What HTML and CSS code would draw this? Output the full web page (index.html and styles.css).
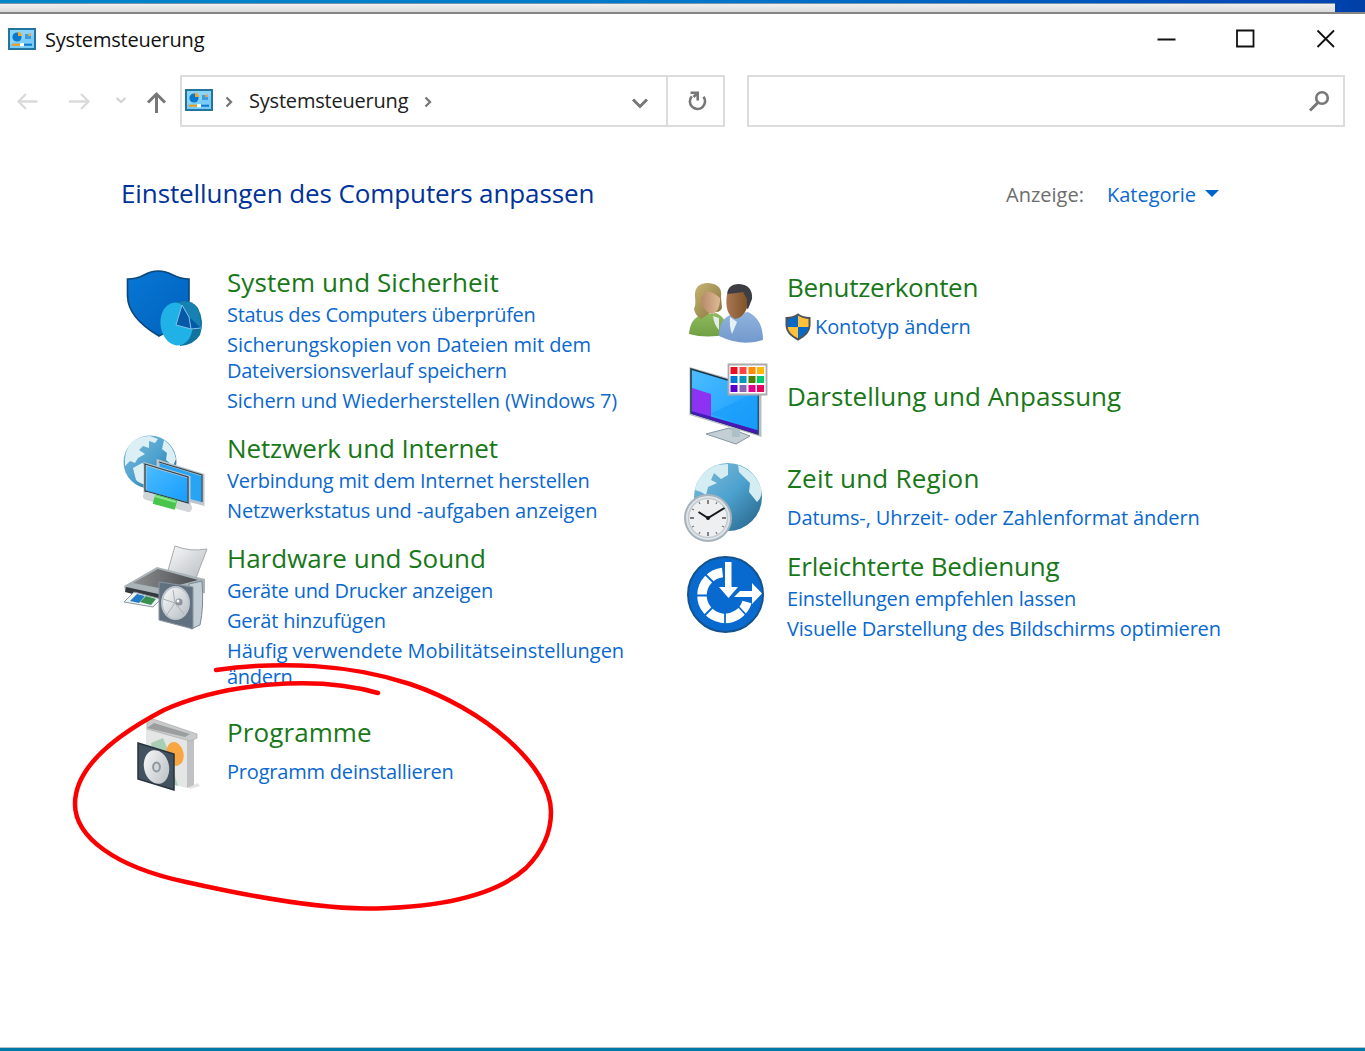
FILE: index.html
```html
<!DOCTYPE html>
<html lang="de">
<head>
<meta charset="utf-8">
<title>Systemsteuerung</title>
<link rel="stylesheet" href="styles.css">
</head>
<body>
<svg class="defs" width="0" height="0" aria-hidden="true">
  <defs>
    <symbol id="panel" viewBox="0 0 28 22">
      <rect x="1" y="1" width="26" height="20" fill="#79ccf8" stroke="#23749f" stroke-width="2"/>
      <path d="M2 2H26V7L2 16Z" fill="#9bdcfb" opacity=".5"/>
      <circle cx="9" cy="9" r="4.6" fill="#0879cf"/>
      <path d="M10 8V3.5A5 5 0 0 1 14 8Z" fill="#f3a52b"/>
      <path d="M17 6H23V11H17Z" fill="#409bd8"/><path d="M20 5.5H23V8H20Z" fill="#dba35f"/>
      <path d="M4 16.7H13" stroke="#f29b16" stroke-width="2"/><path d="M12 16.7H16" stroke="#fff" stroke-width="3"/><path d="M16 16.7H24" stroke="#0879cf" stroke-width="2"/>
    </symbol>
    <linearGradient id="globe" x1="0" y1="0" x2="1" y2="1"><stop offset="0" stop-color="#85bcd8"/><stop offset=".5" stop-color="#4da2cf"/><stop offset="1" stop-color="#235f83"/></linearGradient>
    <linearGradient id="screen" x1="0" y1="0" x2="1" y2="1"><stop offset="0" stop-color="#4dbdff"/><stop offset="1" stop-color="#159bff"/></linearGradient>
    <linearGradient id="shield" x1="0" y1="0" x2="1" y2="1"><stop offset="0" stop-color="#0877d4"/><stop offset="1" stop-color="#0061bd"/></linearGradient>
    <linearGradient id="metal" x1="0" y1="0" x2="1" y2="1"><stop offset="0" stop-color="#fafafa"/><stop offset="1" stop-color="#b7bdc2"/></linearGradient>
    <linearGradient id="hair" x1="0" y1="0" x2="1" y2="1"><stop offset="0" stop-color="#c9b674"/><stop offset="1" stop-color="#82703b"/></linearGradient>
    <linearGradient id="green" x1="0" y1="0" x2="0" y2="1"><stop offset="0" stop-color="#8fb95d"/><stop offset="1" stop-color="#71a044"/></linearGradient>
    <linearGradient id="blue" x1="0" y1="0" x2="0" y2="1"><stop offset="0" stop-color="#91b4de"/><stop offset="1" stop-color="#7299cc"/></linearGradient>
    <linearGradient id="skin" x1="0" y1="0" x2="1" y2="0"><stop offset="0" stop-color="#b58a6a"/><stop offset="1" stop-color="#dfb995"/></linearGradient>
    <linearGradient id="skin-dark" x1="0" y1="0" x2="1" y2="0"><stop offset="0" stop-color="#a87853"/><stop offset="1" stop-color="#815329"/></linearGradient>
    <linearGradient id="tray" x1="0" y1="0" x2="1" y2="0"><stop offset="0" stop-color="#8c8e90"/><stop offset="1" stop-color="#4a4d50"/></linearGradient>
  </defs>
</svg>

<div class="backdrop"><div class="behind"></div></div>
<main class="window">
  <header class="titlebar">
    <svg class="panel-icon"><use href="#panel"/></svg>
    <span class="caption snug">Systemsteuerung</span>
    <svg class="controls" viewBox="1150 24 200 30" fill="none" stroke="#111" stroke-width="1.800"><path d="M1157.500 39.500H1175.500M1237 30.500H1253.500V46.500H1237ZM1317.500 30.500L1334 47M1334 30.500L1317.500 47"/></svg>
  </header>

  <nav class="toolbar">
    <svg class="arrows" viewBox="0 75 180 52" fill="none" stroke-width="2.300"><path d="M37.500 101.500H18.500M26 94L18.500 101.500L26 109" stroke="#dadada"/><path d="M69 101.500H88.500M81 94L88.500 101.500L81 109" stroke="#dadada"/><path d="M116.500 98L121 102L125.500 98" stroke="#d3d3d3"/><path d="M156.500 113V94.500M148 102.500L156.500 94L165 102.500" stroke="#777" stroke-width="3"/></svg>
    <div class="address">
      <svg class="panel-icon"><use href="#panel"/></svg>
      <svg class="crumb-sep" viewBox="0 0 10 12"><path d="M2.500 1.500L7 6L2.500 10.500"/></svg>
      <span class="crumb snug">Systemsteuerung</span>
      <svg class="crumb-sep" viewBox="0 0 10 12"><path d="M2.500 1.500L7 6L2.500 10.500"/></svg>
      <svg class="drop" viewBox="0 0 18 12"><path d="M2 2.500L9 9.500L16 2.500"/></svg>
    </div>
    <div class="reload"><svg viewBox="0 0 22 22" width="22" height="22" fill="none" stroke="#777" stroke-width="2.600"><path d="M5.800 6.300A7.600 7.600 0 1 0 17.500 6.800M4.500 2.800H11.700V10.500M11.500 3L7.500 7"/></svg></div>
    <div class="search"><svg viewBox="0 0 24 22" width="24" height="22" fill="none" stroke="#777"><circle cx="15" cy="8" r="5.800" stroke-width="2.600"/><path d="M11 12.500L3 20.500" stroke-width="3"/></svg></div>
  </nav>

  <section class="heading">
    <h1>Einstellungen des Computers anpassen</h1>
    <span class="view-label">Anzeige:</span>
    <a class="view-value">Kategorie</a>
    <svg class="view-arrow" viewBox="0 0 14 8"><path d="M0 0H14L7 7Z" fill="#0066cc"/></svg>
  </section>

  <div class="categories">
    <div class="column">
      <article class="group">
        <svg class="icon h149" viewBox="120 265 107 149">
          <path d="M127.500 279Q137 279 144 275Q158 267 173 275Q181 279 189 279V300Q188 322 159 336Q128 318 127.500 296Z" fill="url(#shield)" stroke="#0b4779" stroke-width="1.600"/>
          <path d="M177 302Q190 298 198 308Q205 322 200 335Q194 345 180 346Z" fill="#11749f"/>
          <ellipse cx="176.500" cy="324" rx="16" ry="21.500" transform="rotate(-8 176.500 324)" fill="#20b2e7"/>
          <path d="M180 302Q194 299 199 312L201 328L190 328Z" fill="#1681b2"/><path d="M182 305L176 325L191 329L201 328L189 317Z" fill="#0759a8"/><path d="M182 305L176 325L191 329L201 328M182 305L189 317L191 329" fill="none" stroke="#7fc4ea" stroke-width="1"/>
        </svg>
        <div class="text">
          <h2 class="wide">System und Sicherheit</h2>
          <a class="tight">Status des Computers überprüfen</a>
          <a><span class="near">Sicherungskopien von Dateien mit dem</span><br><span class="tight">Dateiversionsverlauf speichern</span></a>
          <a class="close">Sichern und Wiederherstellen (Windows 7)</a>
        </div>
      </article>
      <article class="group">
        <svg class="icon h93" viewBox="120 431 107 93">
          <circle cx="150" cy="462" r="26.500" fill="url(#globe)"/>
          <path d="M131 443Q139 436 150 436L158 439L155 443L149 441L149 448L143 446L139 450L145 454L138 458L135 463L130 461L125 466Q124 451 131 443Z" fill="#dceff4"/><path d="M164 440Q174 447 176 459L173 466L166 460L167 453L162 449ZM133 468L142 463L153 471L150 486Q140 484 136 480Z" fill="#dceff4"/>
          <path d="M158 461L203 475V504L158 492Z" fill="#28a4f5" stroke="#bcc6cc" stroke-width="3"/><path d="M159 462L202 475V502" fill="none" stroke="#31434f" stroke-width="1.200"/>
          <path d="M145 464L189 477V504L145 492Z" fill="url(#screen)" stroke="#bcc6cc" stroke-width="3"/><path d="M145 464L188 477V503L145 491Z" fill="none" stroke="#294252" stroke-width="1.300"/>
          <path d="M147 496L188 508" stroke="#d0d6d8" stroke-width="8" stroke-linecap="round"/><path d="M154 499L176 505" stroke="#48c64c" stroke-width="10"/><path d="M155 496L176 502" stroke="#8ce58d" stroke-width="2"/>
        </svg>
        <div class="text">
          <h2 class="close">Netzwerk und Internet</h2>
          <a class="snug">Verbindung mit dem Internet herstellen</a>
          <a class="close">Netzwerkstatus und -aufgaben anzeigen</a>
        </div>
      </article>
      <article class="group">
        <svg class="icon h149" viewBox="120 541 107 149">
          <path d="M175 546Q190 552 207 549L196 578L167 574Z" fill="url(#metal)" stroke="#a7a9ab" stroke-width="1"/>
          <path d="M124 586L157 567L205 579V593L160 601L125 590Z" fill="#aab3b8"/>
          <path d="M133 583L158 569L198 580L164 589Z" fill="url(#tray)"/><path d="M126 587L163 595V602L125 592Z" fill="#33393c"/>
          <path d="M124 602L134 592L161 599L153 607Z" fill="#edf3f7" stroke="#8b969d"/><path d="M130 601L137 594L145 596L139 603Z" fill="#227cc5"/><path d="M140 602L146 596L156 599L151 605Z" fill="#398f50"/>
          <path d="M189 584L202 581Q204 607 200 625L191 629Z" fill="#c3cdd5" stroke="#7c8993"/>
          <path d="M159 582L193 587V629L159 620Z" fill="#62717f" stroke="#8996a1"/>
          <ellipse cx="175.500" cy="603" rx="13.500" ry="16" fill="url(#metal)" stroke="#bcc5cc" stroke-width="2"/><path d="M175 603L163 599M175 603L166 616M175 603L173 590M175 603L184 614" stroke="#a7b0b5"/><circle cx="179" cy="602" r="3.600" fill="#8b949b"/><circle cx="178" cy="601" r="1.500" fill="#fff"/>
        </svg>
        <div class="text">
          <h2>Hardware und Sound</h2>
          <a class="tight">Geräte und Drucker anzeigen</a>
          <a class="snug">Gerät hinzufügen</a>
          <a><span class="near">Häufig verwendete Mobilitätseinstellungen</span><br><span class="tight">ändern</span></a>
        </div>
      </article>
      <article class="group single far">
        <svg class="icon h70" viewBox="120 715 107 70">
          <path d="M188 787L198 783L200 786L190 789Z" fill="#e4e4e4"/>
          <path d="M146 727L187 738V788L146 777Z" fill="#e4e5e5"/><path d="M187 738L194 734V785L187 788Z" fill="#bfc1c2"/>
          <path d="M147 720L153 719L197 734V738L190 741L147 729Z" fill="#c9cbcb" stroke="#aeb0b0" stroke-width=".8"/><path d="M154 723L190 734L185 737L147 728Z" fill="#9b9e9f"/>
          <path d="M151 743L163 738L170 755L154 762ZM172 767L178 786L168 783Z" fill="#a8cfb5"/><ellipse cx="175" cy="754" rx="8.500" ry="12" transform="rotate(-12 175 754)" fill="#f7a642"/>
          <path d="M138 743L174 754V790L138 779Z" fill="#435260" stroke="#27323b" stroke-width="1.500"/><ellipse cx="156.500" cy="767" rx="12.500" ry="17" transform="rotate(-12 156.500 767)" fill="url(#metal)"/><ellipse cx="156.500" cy="767" rx="3.400" ry="4.500" fill="#d3d8db" stroke="#8d999f" stroke-width="2"/>
        </svg>
        <div class="text">
          <h2 class="wide">Programme</h2>
          <a class="snug">Programm deinstallieren</a>
        </div>
      </article>
    </div>

    <div class="column right">
      <article class="group single">
        <svg class="icon h70" viewBox="680 270 107 70">
          <path d="M689 334Q690 319 701 315L716 313Q728 318 727 334Q708 339 689 334Z" fill="url(#green)"/>
          <path d="M713 316L719 318V330Q714 325 713 316Z" fill="#e2ebe8"/>
          <path d="M694 309Q696 304 695 297Q694 283 708 283Q723 284 721 297L722 308Q719 314 713 311L701 319Q695 315 694 309Z" fill="url(#hair)"/>
          <path d="M701 298Q704 296 706 291Q714 292 720 298Q720 313 711 314Q702 310 701 298Z" fill="url(#skin)"/>
          <path d="M719 336Q719 320 730 315L748 312Q763 319 763 340Q742 347 719 336Z" fill="url(#blue)"/>
          <path d="M730 317L737 322L732 334Q729 326 730 317Z" fill="#e6f1f6"/>
          <path d="M727 296Q727 284 739 284Q753 285 752 299L748 309L742 305Z" fill="#3d3e42"/>
          <path d="M727 294Q738 293 743 292L747 299V308Q743 318 735 319Q724 314 727 294Z" fill="url(#skin-dark)"/>
        </svg>
        <div class="text">
          <h2 class="tight">Benutzerkonten</h2>
          <a class="guarded close"><svg class="uac" viewBox="0 0 26 28"><path d="M13 1.500Q18 5 24.500 5V13Q24 21 13 26.500Q2 21 1.500 13V5Q8 5 13 1.500Z" fill="#ffc13b"/><path d="M13 2V14H2V5Q8 5 13 2ZM13 14H24Q23 21 13 26Z" fill="#0869c4"/><path d="M13 1.500Q18 5 24.500 5V13Q24 21 13 26.500Q2 21 1.500 13V5Q8 5 13 1.500Z" fill="none" stroke="#4d5358" stroke-width="2"/></svg>Kontotyp ändern</a>
        </div>
      </article>
      <article class="group look">
        <svg class="icon h36" viewBox="680 379 107 36">
          <path d="M706 434L729 428L750 436L736 444Z" fill="#c3ced5" stroke="#8598a4"/><path d="M732 424H740V437H732Z" fill="#afbfc7"/>
          <path d="M691 369L760 389V435L691 414Z" fill="url(#screen)" stroke="#b5bec5" stroke-width="3"/><path d="M691 369L758 389V434L691 413Z" fill="url(#screen)" stroke="#1c3543" stroke-width="1.500"/>
          <path d="M710 414L758 391V430Z" fill="#169bf8" opacity=".6"/><path d="M692 388L711 394V417L692 411Z" fill="#8d31f3"/><path d="M692 411L757 430V434L692 414Z" fill="#4718b5"/>
          <path d="M728.500 364.500H766.500V394.500H728.500Z" fill="#fff" stroke="#aaa" stroke-width="1.800"/>
          <path d="M730.500 367H737.500V374H730.500Z" fill="#e81123"/><path d="M739.500 367H746.500V374H739.500Z" fill="#ff4343"/><path d="M748.500 367H755.500V374H748.500Z" fill="#ff8c00"/><path d="M757 367H764V374H757Z" fill="#ffb900"/>
          <path d="M730.500 376H737.500V383H730.500Z" fill="#0078d7"/><path d="M739.500 376H746.500V383H739.500Z" fill="#0099bc"/><path d="M748.500 376H755.500V383H748.500Z" fill="#498205"/><path d="M757 376H764V383H757Z" fill="#00cc6a"/>
          <path d="M730.500 385H737.500V392H730.500Z" fill="#5a00cc"/><path d="M739.500 385H746.500V392H739.500Z" fill="#8764b8"/><path d="M748.500 385H755.500V392H748.500Z" fill="#e3008c"/><path d="M757 385H764V392H757Z" fill="#ea005e"/>
        </svg>
        <div class="text"><h2>Darstellung und Anpassung</h2></div>
      </article>
      <article class="group single time">
        <svg class="icon h70" viewBox="680 461 107 70">
          <circle cx="728" cy="497" r="34" fill="url(#globe)"/>
          <path d="M695 490Q698 472 717 465L728 464L728 475L721 479L714 473L711 480L717 483L708 487L706 495L701 492ZM738 465Q755 471 761 488Q763 497 757 502L749 492L750 483L739 472Z" fill="#d4edf2"/>
          <circle cx="708" cy="518" r="23" fill="#dfe4e8" stroke="#a7b3bc" stroke-width="2"/><circle cx="708" cy="518" r="19.500" fill="#eeeff0" stroke="#c3cbd0" stroke-width="1.500"/>
          <g fill="none" stroke="#777" stroke-width="1.800"><path d="M708 500V504M708 532V536M690 518H694M722 518H726"/><path stroke-width="1.200" d="M699 502L700 504M717 502L716 504M692 509L694 510M724 527L722 526M699 534L700 532M717 534L716 532M692 527L694 526"/></g>
          <path d="M698.500 512L708 518L724.500 508" fill="none" stroke="#171a1c" stroke-width="2"/><circle cx="708" cy="518" r="2" fill="#171a1c"/>
        </svg>
        <div class="text">
          <h2 class="wider">Zeit und Region</h2>
          <a class="close">Datums-, Uhrzeit- oder Zahlenformat ändern</a>
        </div>
      </article>
      <article class="group access">
        <svg class="icon h93" viewBox="680 549 107 93">
          <circle cx="725.500" cy="594.500" r="37.500" fill="#0869cf" stroke="#13528d" stroke-width="2"/>
          <path d="M722.500 572.500A23 23 0 1 0 747 602" fill="none" stroke="#fff" stroke-width="9.500"/>
          <path d="M696 595.500H710M705 574L717 586M705 615L715 605M725 608V625M736 604L747 616" stroke="#0869cf" stroke-width="1.800"/>
          <path d="M725 562H731.500V587H738L728.500 598L719 587H725Z" fill="#fff"/><path d="M740 591H752V583L762 593.500L752 604V597H734Z" fill="#fff"/>
        </svg>
        <div class="text">
          <h2 class="snug">Erleichterte Bedienung</h2>
          <a class="snug">Einstellungen empfehlen lassen</a>
          <a class="snug">Visuelle Darstellung des Bildschirms optimieren</a>
        </div>
      </article>
    </div>
  </div>
</main>
<svg class="marker" viewBox="0 0 1365 1051" fill="none" stroke="#fb0000" stroke-width="4.500" stroke-linecap="round" stroke-linejoin="round"><path d="M216 670C280 661 350 664 410 684C482 708 551 765 551 812C551 832 544 850 526 868C493 898 430 908 365 908.500C310 908 235 893 186 882C115 867 75 837 75 804C75 765 120 733 164 710C225 683 315 675 378 693"/></svg>
</body>
</html>
```
FILE: styles.css
```css
* { box-sizing: border-box; }
body { margin: 0; height: 1051px; overflow: hidden; display: flex; flex-direction: column; background: #fff; color: #202020; font: 20px/26px "Open Sans", "Noto Sans", sans-serif; }
svg { display: block; flex: none; }
.defs { position: absolute; }
.backdrop { height: 14px; padding-top: 3px; background: linear-gradient(90deg, #0086c9, #0078ca 50%, #0045b5 96%, #003fa5); border-bottom: 2px solid #858585; }
.behind { width: 1335px; height: 9px; background: linear-gradient(#f0f0f0, #d9d9d9); border-top: 1px solid #7795aa; }
.window { flex: 1; background: #fff; border-bottom: 3px solid #0078a8; box-shadow: inset 0 -1px #b8c2c8; }
.titlebar { height: 61px; padding: 14px 15px 0 8px; display: flex; align-items: flex-start; }
.panel-icon { width: 28px; height: 22px; }
.caption { margin-left: 9px; margin-top: -1px; color: #111; }
.controls { width: 200px; height: 30px; margin: -4px 0 0 auto; }
.toolbar { display: flex; height: 52px; }
.arrows { width: 180px; height: 52px; }
.address, .reload, .search { border: 2px solid #dcdcdc; display: flex; }
.address { width: 488px; padding: 12px 0 0 3px; align-items: flex-start; }
.crumb-sep { width: 10px; height: 12px; margin-top: 7px; margin-left: 11px; fill: none; stroke: #777; stroke-width: 2.3; }
.crumb { margin: -1px 4px 0 15px; }
.drop { width: 18px; height: 12px; margin: 8px 17px 0 auto; fill: none; stroke: #777; stroke-width: 3; }
.reload { width: 59px; margin-left: -2px; padding-left: 3px; align-items: center; justify-content: center; }
.search { width: 598px; margin-left: 22px; padding-right: 12px; align-items: center; justify-content: flex-end; }
.heading { display: flex; height: 36px; margin: 48px 0 53px 121px; align-items: center; }
h1, h2 { margin: 0; font-weight: 400; font-size: 26px; line-height: 36px; white-space: nowrap; }
h1 { width: 885px; color: #003399; letter-spacing: -0.1px; }
h2 { color: #187818; }
a { color: #0a68cf; white-space: nowrap; }
.view-label, .view-value { margin-top: 4px; }
.view-label { width: 101px; color: #6d6d6d; }
.view-value { width: 98px; }
.view-arrow { width: 14px; height: 8px; margin-top: 2px; }
.categories { display: flex; margin-left: 120px; }
.column { width: 560px; padding-top: 1px; }
.right { padding-top: 6px; }
.group { display: flex; margin-bottom: 17px; }
.icon { width: 107px; overflow: visible; }
.h149 { height: 149px; }
.h93 { height: 93px; }
.h70 { height: 70px; }
.h36 { height: 36px; }
.text { display: flex; flex-direction: column; gap: 4px; }
.text h2 { margin: -1px 0 -2px; }
.single h2 { margin-bottom: 5px; }
.far { margin-top: 25px; }
.look { margin-top: 39px; }
.time { margin-top: 46px; }
.access { margin-top: 18px; }
.guarded { display: flex; align-items: center; }
.uac { width: 26px; height: 28px; margin: -1px 4px -1px -2px; }
.wider { letter-spacing: 0.2px; }
.wide { letter-spacing: 0.1px; }
.near { letter-spacing: -0.05px; }
.close { letter-spacing: -0.12px; }
.snug { letter-spacing: -0.2px; }
.tight { letter-spacing: -0.28px; }
.marker { position: absolute; left: 0; top: 0; width: 1365px; height: 1051px; pointer-events: none; }
```
